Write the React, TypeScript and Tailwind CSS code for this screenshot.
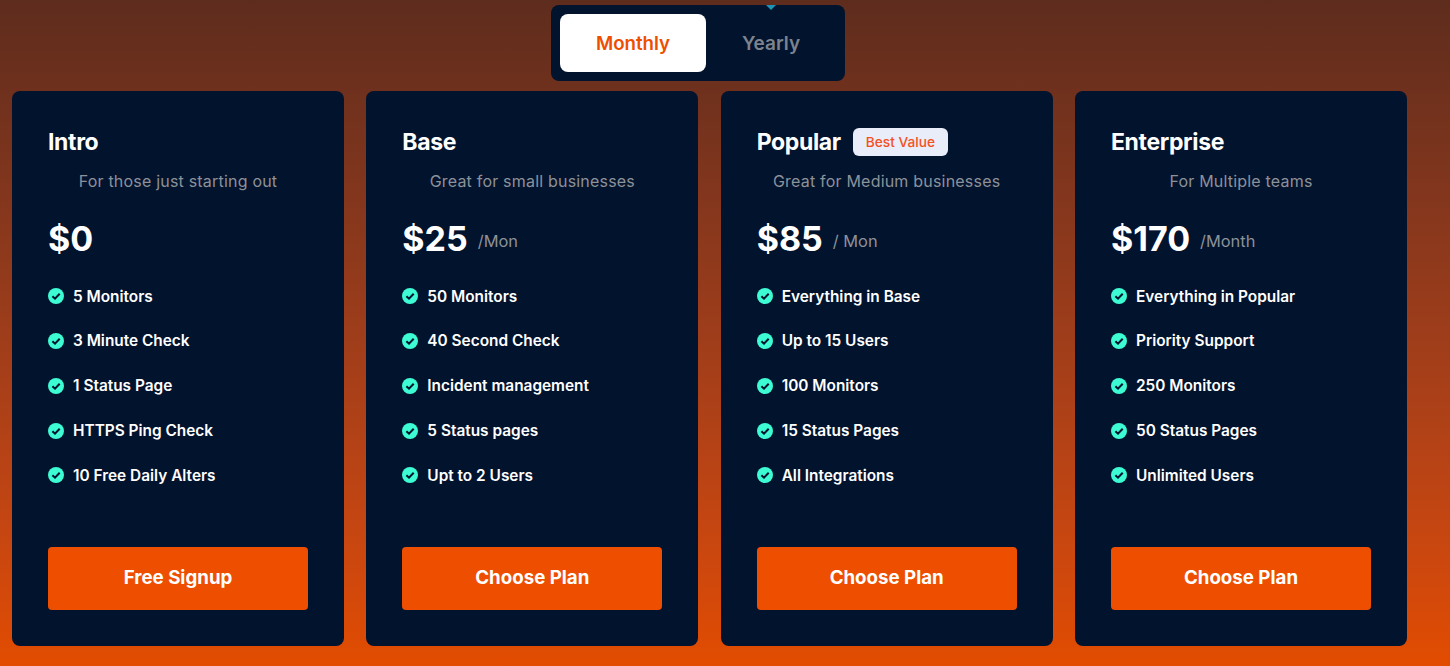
const plans = [
    {
        name: 'Intro',
        tagline: 'For those just starting out',
        price: '$0',
        period: '',
        cta: 'Free Signup',
        features: ['5 Monitors', '3 Minute Check', '1 Status Page', 'HTTPS Ping Check', '10 Free Daily Alters'],
    },
    {
        name: 'Base',
        tagline: 'Great for small businesses',
        price: '$25',
        period: '/Mon',
        cta: 'Choose Plan',
        features: ['50 Monitors', '40 Second Check', 'Incident management', '5 Status pages', 'Upt to 2 Users'],
    },
    {
        name: 'Popular',
        badge: 'Best Value',
        tagline: 'Great for Medium businesses',
        price: '$85',
        period: '/ Mon',
        cta: 'Choose Plan',
        features: ['Everything in Base', 'Up to 15 Users', '100 Monitors', '15 Status Pages', 'All Integrations'],
    },
    {
        name: 'Enterprise',
        tagline: 'For Multiple teams',
        price: '$170',
        period: '/Month',
        cta: 'Choose Plan',
        features: ['Everything in Popular', 'Priority Support', '250 Monitors', '50 Status Pages', 'Unlimited Users'],
    },
]

function CheckIcon() {
    return (
        <svg width="16" height="16" viewBox="0 0 16 16" className="shrink-0">
            <circle cx="8" cy="8" r="8" fill="#3dfbd3" />
            <path d="M4.4 8.2 L7 10.7 L11.7 5.7" fill="none" stroke="#02132e" strokeWidth="2" />
        </svg>
    )
}

export default function App() {
    return (
        <div className="h-[666px] w-[1450px] overflow-hidden bg-gradient-to-b from-[#5e2c1d] to-[#e24c00] pt-[5px] pl-3 font-['Inter',sans-serif]">
            {/* toggle */}
            <div className="relative ml-[539px] flex h-[76px] w-[294px] items-center rounded-lg bg-[#02132e] p-[9px]">
                <div className="flex h-[58px] w-[146px] items-center justify-center rounded-lg bg-white pt-[2px] text-[18.7px] font-semibold text-[#ee4e00]">
                    Monthly
                </div>
                <div className="flex h-[58px] w-[130px] items-center justify-center pt-[2px] text-[19px] font-semibold text-[#7d838d]">
                    Yearly
                </div>
                <div className="absolute top-0 left-[215px] h-0 w-0 border-x-[5px] border-t-[5px] border-x-transparent border-t-[#1f93b5]" />
            </div>

            {/* plans */}
            <div className="mt-[10px] grid w-[1395px] grid-cols-4 gap-x-[22.33px]">
                {plans.map((plan) => (
                    <div key={plan.name} className="flex h-[555px] flex-col rounded-lg bg-[#02132e] px-9 pt-[37px]">
                        <div className="flex h-[28px] items-center gap-3">
                            <h3 className="text-[23px] font-bold tracking-[-0.35px] text-white">{plan.name}</h3>
                            {plan.badge && (
                                <span className="flex h-[28px] items-center rounded-md bg-[#e9ecf9] px-[13px] text-[13.7px] font-medium text-[#f4511e]">
                                    {plan.badge}
                                </span>
                            )}
                        </div>
                        <p className="mt-[13px] h-[24px] text-center text-[16px] leading-[24px] tracking-[0.2px] text-[#8d9199]">{plan.tagline}</p>
                        <div className="mt-[23px] flex h-[44px] items-center gap-[10px]">
                            <span className="text-[34px] font-bold text-white">{plan.price}</span>
                            {plan.period && <span className="mt-[6px] text-[16.4px] text-[#8d9199]">{plan.period}</span>}
                        </div>
                        <ul className="mt-[24.2px] flex flex-col gap-[20.8px]">
                            {plan.features.map((f) => (
                                <li key={f} className="flex h-[24px] items-center gap-[9px] text-[15.4px] font-semibold text-white">
                                    <CheckIcon />
                                    {f}
                                </li>
                            ))}
                        </ul>
                        <button className="mt-[59.6px] h-[63px] w-[260px] rounded bg-[#ee4e00] text-[18.7px] font-bold text-white">
                            {plan.cta}
                        </button>
                    </div>
                ))}
            </div>
        </div>
    )
}
